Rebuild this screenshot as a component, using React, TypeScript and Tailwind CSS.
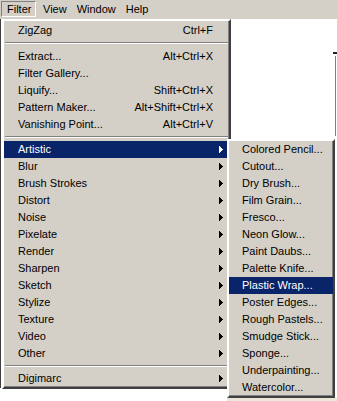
import React from 'react';

type Item =
  | { kind: 'item'; label: string; shortcut?: string; sub?: boolean; active?: boolean }
  | { kind: 'sep'; h: string; pt: string };

const FILTER_MENU: Item[] = [
  { kind: 'item', label: 'ZigZag', shortcut: 'Ctrl+F' },
  { kind: 'sep', h: 'h-[9px]', pt: 'pt-[3px]' },
  { kind: 'item', label: 'Extract...', shortcut: 'Alt+Ctrl+X' },
  { kind: 'item', label: 'Filter Gallery...' },
  { kind: 'item', label: 'Liquify...', shortcut: 'Shift+Ctrl+X' },
  { kind: 'item', label: 'Pattern Maker...', shortcut: 'Alt+Shift+Ctrl+X' },
  { kind: 'item', label: 'Vanishing Point...', shortcut: 'Alt+Ctrl+V' },
  { kind: 'sep', h: 'h-[8px]', pt: 'pt-[3px]' },
  { kind: 'item', label: 'Artistic', sub: true, active: true },
  { kind: 'item', label: 'Blur', sub: true },
  { kind: 'item', label: 'Brush Strokes', sub: true },
  { kind: 'item', label: 'Distort', sub: true },
  { kind: 'item', label: 'Noise', sub: true },
  { kind: 'item', label: 'Pixelate', sub: true },
  { kind: 'item', label: 'Render', sub: true },
  { kind: 'item', label: 'Sharpen', sub: true },
  { kind: 'item', label: 'Sketch', sub: true },
  { kind: 'item', label: 'Stylize', sub: true },
  { kind: 'item', label: 'Texture', sub: true },
  { kind: 'item', label: 'Video', sub: true },
  { kind: 'item', label: 'Other', sub: true },
  { kind: 'sep', h: 'h-[8px]', pt: 'pt-[3px]' },
  { kind: 'item', label: 'Digimarc', sub: true },
];

const ARTISTIC = [
  'Colored Pencil...',
  'Cutout...',
  'Dry Brush...',
  'Film Grain...',
  'Fresco...',
  'Neon Glow...',
  'Paint Daubs...',
  'Palette Knife...',
  'Plastic Wrap...',
  'Poster Edges...',
  'Rough Pastels...',
  'Smudge Stick...',
  'Sponge...',
  'Underpainting...',
  'Watercolor...',
];

const Arrow: React.FC<{ white?: boolean }> = ({ white }) => (
  <svg width="4" height="7" viewBox="0 0 4 7" shapeRendering="crispEdges" className="shrink-0">
    <g fill={white ? '#ffffff' : '#000000'}>
      <rect x="0" y="0" width="1" height="7" />
      <rect x="1" y="1" width="1" height="5" />
      <rect x="2" y="2" width="1" height="3" />
      <rect x="3" y="3" width="1" height="1" />
    </g>
  </svg>
);

// classic raised 3d frame
const frame =
  'border-2 border-t-white border-l-white border-r-[#404040] border-b-[#404040] shadow-[inset_-1px_-1px_0_#808080]';

export default function App() {
  return (
    <div
      className="relative w-[337px] h-[401px] overflow-hidden bg-white text-[11px] text-black"
      style={{ fontFamily: '"Liberation Sans", Arial, sans-serif' }}
    >
      {/* menu bar */}
      <div className="flex h-[19px] bg-[#d4d0c8] pt-[1px]">
        <div className="ml-[1px] w-[35px] h-[16px] pl-[5px] leading-[15px] border border-t-[#808080] border-l-[#808080] border-r-white border-b-white">
          Filter
        </div>
        <div className="ml-[7px] leading-[16px]">View</div>
        <div className="ml-[10px] leading-[16px]">Window</div>
        <div className="ml-[10px] leading-[16px]">Help</div>
      </div>

      {/* background window edges */}
      <div className="flex h-[382px]">
        <div className="w-[2px] h-[369px] border-l border-[#404040]" />
        <div className="flex-1" />
        <div className="flex flex-col items-end w-[4px] mr-[0px]">
          <div className="mt-[33px] w-[4px] h-[2px] bg-[#202020]" />
          <div className="mt-[2px] mr-[1px] w-px h-[80px] bg-[#808080]" />
        </div>
      </div>
      <div className="absolute left-[227px] top-[398px] w-[110px] h-[3px] bg-[#ece6d8]" />

      {/* Filter menu */}
      <div className={`absolute left-[2px] top-[19px] w-[229px] bg-[#d4d0c8] pt-[1px] ${frame}`}>
        {FILTER_MENU.map((it, i) =>
          it.kind === 'sep' ? (
            <div key={i} className={`${it.h} ${it.pt} px-[1px]`}>
              <div className="h-px bg-[#808080]" />
              <div className="h-px bg-white" />
            </div>
          ) : (
            <div
              key={i}
              className={`flex items-center h-[17px] pl-[14px] pr-[6px] whitespace-nowrap ${
                it.active ? 'bg-[#0a246a] text-white' : ''
              }`}
            >
              <span className="leading-[17px]">{it.label}</span>
              <span className="flex-1" />
              {it.shortcut && <span className="leading-[17px] mr-[10px]">{it.shortcut}</span>}
              {it.sub && <Arrow white={it.active} />}
            </div>
          )
        )}
      </div>

      {/* Artistic submenu */}
      <div className={`absolute left-[227px] top-[139px] w-[108px] bg-[#d4d0c8] ${frame}`}>
        {ARTISTIC.map((label) => (
          <div
            key={label}
            className={`h-[17px] leading-[17px] pl-[13px] whitespace-nowrap ${
              label === 'Plastic Wrap...' ? 'bg-[#0a246a] text-white' : ''
            }`}
          >
            {label}
          </div>
        ))}
      </div>
    </div>
  );
}
